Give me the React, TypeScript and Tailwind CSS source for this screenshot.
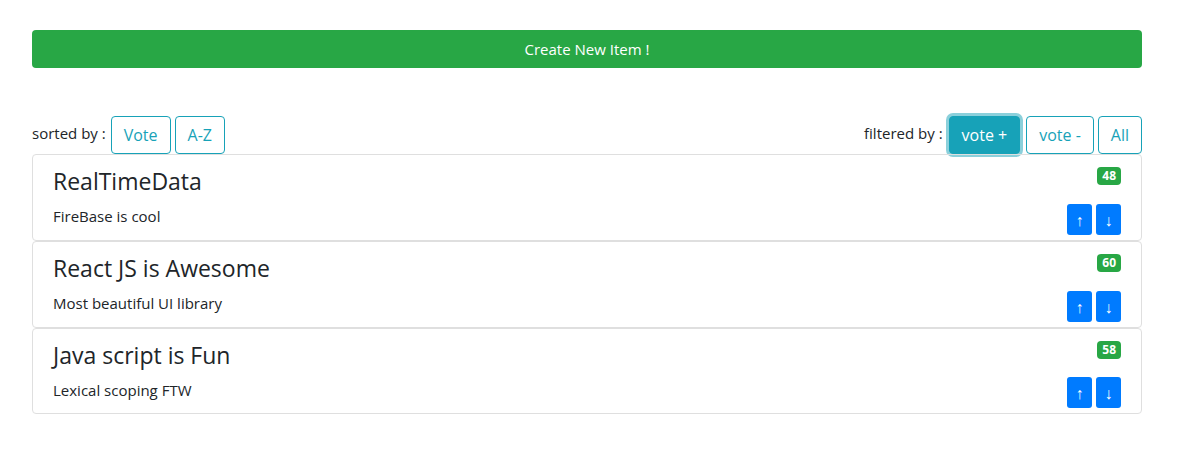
import React from 'react'

const items = [
  { title: 'RealTimeData', description: 'FireBase is cool', votes: 48 },
  { title: 'React JS is Awesome', description: 'Most beautiful UI library', votes: 60 },
  { title: 'Java script is Fun', description: 'Lexical scoping FTW', votes: 58 },
]

const outline =
  'h-[38px] px-[12px] rounded-[4px] border border-[#17a2b8] text-[#17a2b8] text-[16px] leading-[24px] bg-white'

const App = () => {
  return (
    <div className="w-[1182px] h-[451px] bg-white text-[#212529] font-['Open_Sans',sans-serif]">
      <div className="ml-[32px] w-[1110px] pt-[30px]">
        <button className="w-full h-[38px] rounded-[4px] bg-[#28a745] text-white text-[15px] leading-[24px]">
          Create New Item !
        </button>

        <div className="mt-[48px] flex justify-between items-center">
          <div className="flex items-center gap-[4px]">
            <span className="text-[15px] -mt-[3px] mr-[1px]">sorted by :</span>
            <button className={outline}>Vote</button>
            <button className={outline}>A-Z</button>
          </div>
          <div className="flex items-center gap-[4px]">
            <span className="text-[15px] -mt-[3px] mr-[2px]">filtered by :</span>
            <button className="h-[38px] px-[12px] rounded-[4px] border border-[#17a2b8] bg-[#17a2b8] text-white text-[16px] leading-[24px] shadow-[0_0_0_3px_rgba(23,162,184,0.5)] mr-[2px]">
              vote +
            </button>
            <button className={outline}>vote -</button>
            <button className={outline}>All</button>
          </div>
        </div>

        <div className="flex flex-col">
          {items.map((item, i) => (
            <div
              key={item.title}
              className={`${i === 2 ? 'h-[86px]' : 'h-[87px]'} border border-[#dfdfdf] rounded-[4px] flex justify-between px-[20px]`}
            >
              <div className="pt-[12px]">
                <h4 className="text-[23px] leading-[29px] font-normal">{item.title}</h4>
                <p className="mt-[8px] text-[15px] leading-[24px]">{item.description}</p>
              </div>
              <div className="pt-[12px] pb-[5px] flex flex-col items-end justify-between">
                <span className="h-[18px] px-[5px] rounded-[4px] bg-[#28a745] text-white text-[12px] font-bold leading-[18px]">
                  {item.votes}
                </span>
                <div className="flex gap-[4px]">
                  <button className="w-[25px] h-[31px] rounded-[3px] bg-[#007bff] text-white text-[16px] leading-[20px]">↑</button>
                  <button className="w-[25px] h-[31px] rounded-[3px] bg-[#007bff] text-white text-[16px] leading-[20px]">↓</button>
                </div>
              </div>
            </div>
          ))}
        </div>
      </div>
    </div>
  )
}

export default App
